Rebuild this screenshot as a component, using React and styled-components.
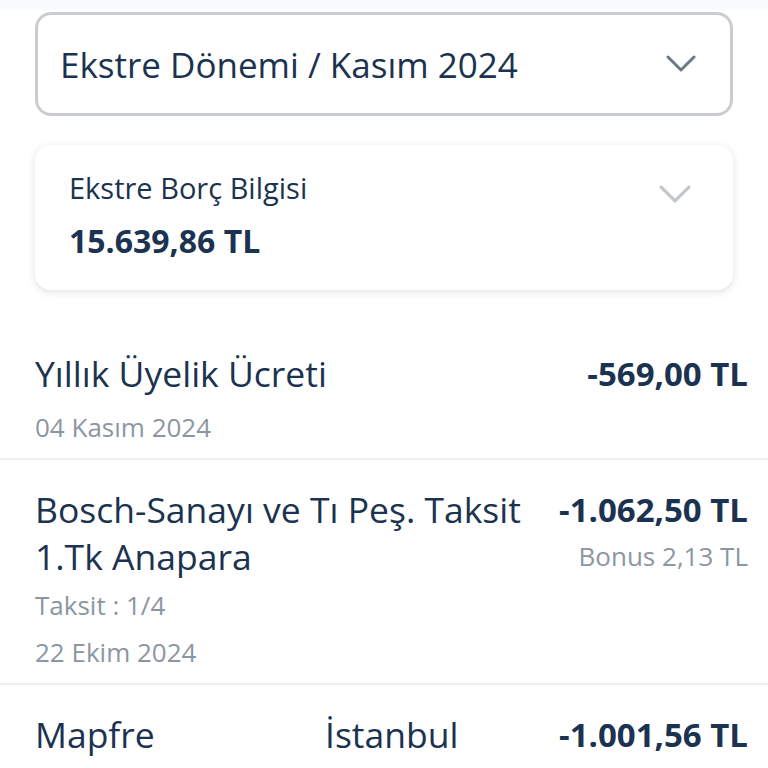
import React from "react";
import styled, { createGlobalStyle } from "styled-components";

const Global = createGlobalStyle`
  body {
    margin: 0;
    background: #ffffff;
    font-family: "Open Sans", "Noto Sans", sans-serif;
    color: #1b3350;
  }
`;

const Page = styled.div`
  width: 768px;
  height: 768px;
  overflow: hidden;
  background: #fff;
`;

const TopStrip = styled.div`
  height: 10px;
  background: #fafbfc;
`;

const Cards = styled.div`
  padding: 2px 35px 0;
  display: flex;
  flex-direction: column;
  gap: 29px;
`;

const Select = styled.div`
  height: 98px;
  border: 3px solid #c9ccd1;
  border-radius: 16px;
  display: flex;
  align-items: center;
  justify-content: space-between;
  padding: 0 34px 0 22px;
`;

const SelectText = styled.span`
  font-size: 35px;
  font-weight: 500;
  color: #1b3350;
`;

const InfoCard = styled.div`
  height: 145px;
  border-radius: 16px;
  background: #fff;
  box-shadow: 0 2px 8px rgba(0, 0, 0, 0.12);
  display: flex;
  justify-content: space-between;
  padding: 23px 42px 0 34px;
  box-sizing: border-box;
`;

const InfoLabel = styled.div`
  font-size: 29px;
  font-weight: 500;
`;

const InfoAmount = styled.div`
  font-size: 32px;
  font-weight: 700;
  margin-top: 12px;
`;

const Chevron = ({ color, size }) => (
  <svg width={size} height={size * 0.6} viewBox="0 0 30 18" fill="none">
    <path d="M2 2 L15 15 L28 2" stroke={color} strokeWidth="3" strokeLinecap="round" strokeLinejoin="round" />
  </svg>
);

const ChevronWrap = styled.div`
  margin-top: ${(p) => p.$top || 0}px;
`;

const List = styled.div`
  margin-top: 36px;
`;

const Row = styled.div`
  padding: ${(p) => p.$pad || "24px 20px 7px 35px"};
  border-bottom: ${(p) => (p.$last ? "none" : "2px solid #eeeff1")};
  display: flex;
  justify-content: space-between;
  gap: 20px;
`;

const Left = styled.div`
  display: flex;
  flex-direction: column;
`;

const Right = styled.div`
  display: flex;
  flex-direction: column;
  align-items: flex-end;
  flex-shrink: 0;
`;

const Title = styled.div`
  font-size: 35.5px;
  font-weight: 500;
  line-height: 47px;
  color: #1b3350;
  margin-bottom: ${(p) => p.$after || 0}px;
`;

const Meta = styled.div`
  font-size: 26px;
  line-height: 47px;
  color: #8c96a3;
`;

const Amount = styled.div`
  font-size: 33px;
  line-height: 47px;
  font-weight: 700;
  color: #1b3350;
`;

const Bonus = styled.div`
  font-size: 26px;
  line-height: 47px;
  color: #8c96a3;
`;

const Merchant = styled.div`
  display: grid;
  grid-template-columns: 290px auto;
  font-size: 35.5px;
  font-weight: 500;
  line-height: 47px;
`;

export default function App() {
  return (
    <Page>
      <Global />
      <TopStrip />
      <Cards>
        <Select>
          <SelectText>Ekstre Dönemi / Kasım 2024</SelectText>
          <Chevron color="#6d7886" size={30} />
        </Select>
        <InfoCard>
          <div>
            <InfoLabel>Ekstre Borç Bilgisi</InfoLabel>
            <InfoAmount>15.639,86 TL</InfoAmount>
          </div>
          <ChevronWrap $top={17}>
            <Chevron color="#c3c7cc" size={32} />
          </ChevronWrap>
        </InfoCard>
      </Cards>
      <List>
        <Row>
          <Left>
            <Title $after={7}>Yıllık Üyelik Ücreti</Title>
            <Meta>04 Kasım 2024</Meta>
          </Left>
          <Right>
            <Amount>-569,00 TL</Amount>
          </Right>
        </Row>
        <Row $pad="26px 20px 7px 35px">
          <Left>
            <Title $after={2}>
              Bosch-Sanayı ve Tı Peş. Taksit
              <br />
              1.Tk Anapara
            </Title>
            <Meta>Taksit : 1/4</Meta>
            <Meta>22 Ekim 2024</Meta>
          </Left>
          <Right>
            <Amount>-1.062,50 TL</Amount>
            <Bonus>Bonus 2,13 TL</Bonus>
          </Right>
        </Row>
        <Row $last $pad="26px 20px 0 35px">
          <Merchant>
            <span>Mapfre</span>
            <span>İstanbul</span>
          </Merchant>
          <Right>
            <Amount>-1.001,56 TL</Amount>
          </Right>
        </Row>
      </List>
    </Page>
  );
}
